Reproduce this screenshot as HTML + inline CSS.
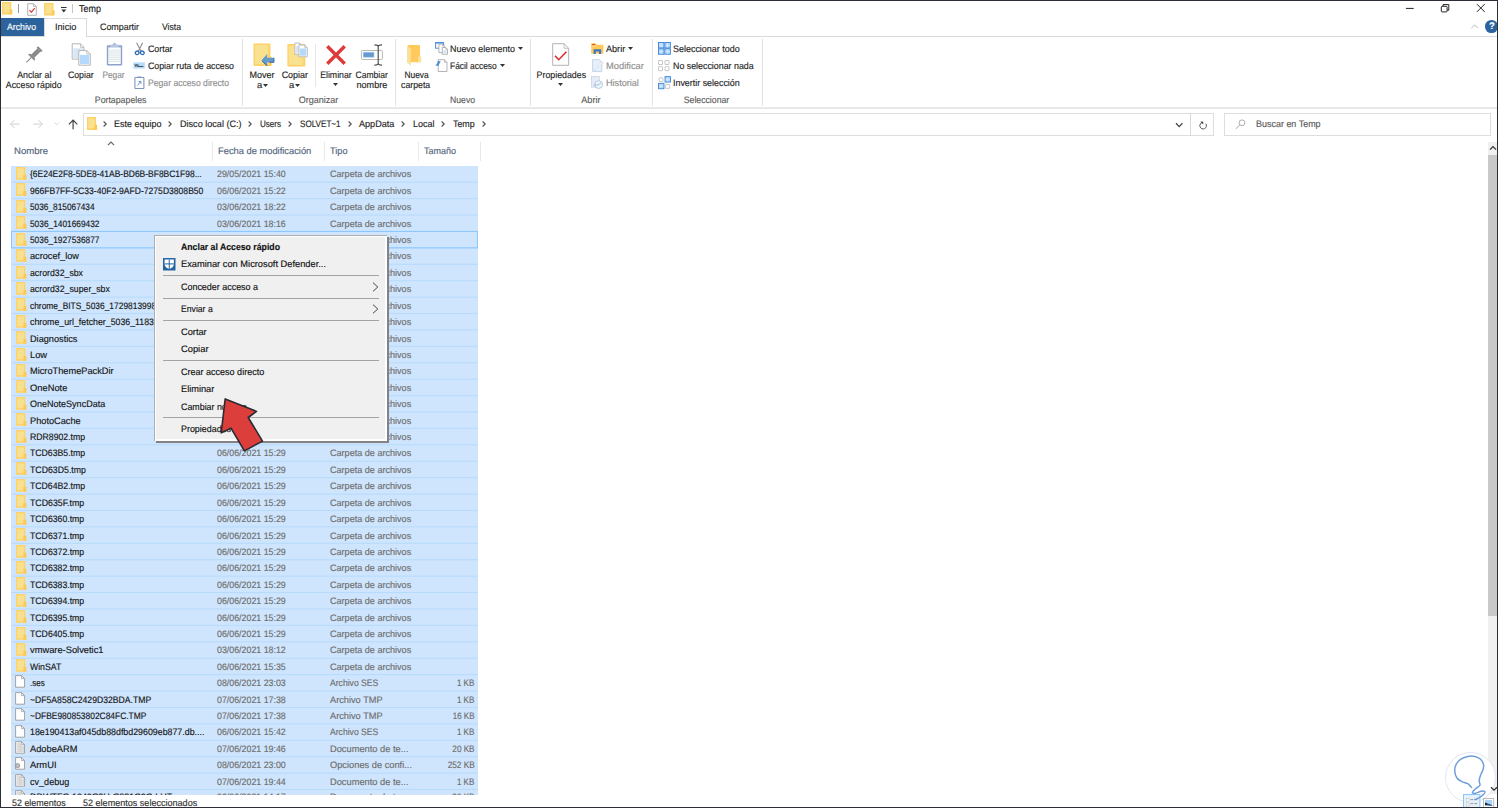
<!DOCTYPE html>
<html lang="es"><head><meta charset="utf-8"><title>Temp</title>
<style>
html,body{margin:0;padding:0;background:#fff;}
body{width:1500px;height:808px;overflow:hidden;position:relative;font-family:"Liberation Sans",sans-serif;font-size:9.4px;text-rendering:geometricPrecision;}
#win{position:absolute;left:0;top:0;width:1500px;height:808px;overflow:hidden;background:#fff;}
#win div,#win svg{position:absolute;}
#win svg{overflow:visible;}
.t{position:absolute;white-space:pre;line-height:14px;height:14px;-webkit-text-stroke:0.15px currentColor;transform-origin:0 0;}

</style></head>
<body>
<div id="win">
<span class="t" style="top:3.10px;color:#111;font-size:10px;left:79.40px;transform:rotate(0.01deg) scaleX(0.8956);">Temp</span>
<div style="left:1px;top:18px;width:42.7px;height:18px;background:#2d639c;"></div>
<span class="t" style="top:20.24px;color:#fff;left:7.30px;transform:rotate(0.01deg) scaleX(0.9275);">Archivo</span>
<div style="left:43.7px;top:18px;width:43.6px;height:18.5px;background:#fff;border:1px solid #dadbdc;border-bottom:none;box-sizing:border-box;"></div>
<span class="t" style="top:20.24px;color:#262626;left:55.00px;transform:rotate(0.01deg) scaleX(0.9730);">Inicio</span>
<span class="t" style="top:20.24px;color:#262626;left:99.70px;transform:rotate(0.01deg) scaleX(0.9476);">Compartir</span>
<span class="t" style="top:20.24px;color:#262626;left:162.00px;transform:rotate(0.01deg) scaleX(0.9184);">Vista</span>
<div style="left:87px;top:36px;width:1410px;height:1px;background:#dadbdc;"></div>
<div style="left:1px;top:36px;width:43px;height:1px;background:#dadbdc;"></div>
<div style="left:1px;top:107px;width:1496px;height:1px;background:#e9eaea;"></div>
<div style="left:1px;top:108px;width:1496px;height:1px;background:#e6e7e7;"></div>
<div style="left:242.0px;top:39px;width:1px;height:67px;background:#e0e1e2;"></div>
<div style="left:395.3px;top:39px;width:1px;height:67px;background:#e0e1e2;"></div>
<div style="left:530.3px;top:39px;width:1px;height:67px;background:#e0e1e2;"></div>
<div style="left:651.5px;top:39px;width:1px;height:67px;background:#e0e1e2;"></div>
<div style="left:761.7px;top:39px;width:1px;height:67px;background:#e0e1e2;"></div>
<div style="left:314.5px;top:43.5px;width:1px;height:43px;background:#e6e6e6;"></div>
<span class="t" style="top:67.74px;color:#262626;left:16.36px;transform-origin:50% 0;transform:rotate(0.01deg) scaleX(0.9374);">Anclar al</span>
<span class="t" style="top:78.04px;color:#262626;left:4.49px;transform-origin:50% 0;transform:rotate(0.01deg) scaleX(0.9374);">Acceso rápido</span>
<span class="t" style="top:67.74px;color:#262626;left:66.59px;transform-origin:50% 0;transform:rotate(0.01deg) scaleX(0.9339);">Copiar</span>
<span class="t" style="top:67.74px;color:#8f8f8f;left:101.08px;transform-origin:50% 0;transform:rotate(0.01deg) scaleX(0.8869);">Pegar</span>
<span class="t" style="top:41.54px;color:#262626;left:148.00px;transform:rotate(0.01deg) scaleX(0.9406);">Cortar</span>
<span class="t" style="top:58.74px;color:#262626;left:148.00px;transform:rotate(0.01deg) scaleX(0.9376);">Copiar ruta de acceso</span>
<span class="t" style="top:75.74px;color:#8f8f8f;left:148.00px;transform:rotate(0.01deg) scaleX(0.9196);">Pegar acceso directo</span>
<span class="t" style="top:93.44px;color:#5e5e5e;left:93.17px;transform-origin:50% 0;transform:rotate(0.01deg) scaleX(0.9357);">Portapapeles</span>
<span class="t" style="top:67.74px;color:#262626;left:249.18px;transform-origin:50% 0;transform:rotate(0.01deg) scaleX(0.9598);">Mover</span>
<span class="t" style="top:78.04px;color:#262626;left:256.59px;transform-origin:50% 0;transform:rotate(0.01deg) scaleX(1.0000);">a</span>
<span class="t" style="top:67.74px;color:#262626;left:280.99px;transform-origin:50% 0;transform:rotate(0.01deg) scaleX(0.9520);">Copiar</span>
<span class="t" style="top:78.04px;color:#262626;left:289.39px;transform-origin:50% 0;transform:rotate(0.01deg) scaleX(1.0000);">a</span>
<span class="t" style="top:67.74px;color:#262626;left:318.56px;transform-origin:50% 0;transform:rotate(0.01deg) scaleX(0.9328);">Eliminar</span>
<span class="t" style="top:67.74px;color:#262626;left:354.18px;transform-origin:50% 0;transform:rotate(0.01deg) scaleX(0.9086);">Cambiar</span>
<span class="t" style="top:78.04px;color:#262626;left:356.20px;transform-origin:50% 0;transform:rotate(0.01deg) scaleX(0.9686);">nombre</span>
<span class="t" style="top:93.44px;color:#5e5e5e;left:297.91px;transform-origin:50% 0;transform:rotate(0.01deg) scaleX(0.9618);">Organizar</span>
<span class="t" style="top:67.74px;color:#262626;left:402.55px;transform-origin:50% 0;transform:rotate(0.01deg) scaleX(0.8964);">Nueva</span>
<span class="t" style="top:78.04px;color:#262626;left:399.76px;transform-origin:50% 0;transform:rotate(0.01deg) scaleX(0.9335);">carpeta</span>
<span class="t" style="top:41.54px;color:#262626;left:450.30px;transform:rotate(0.01deg) scaleX(0.9519);">Nuevo elemento</span>
<span class="t" style="top:58.74px;color:#262626;left:450.30px;transform:rotate(0.01deg) scaleX(0.8962);">Fácil acceso</span>
<span class="t" style="top:93.44px;color:#5e5e5e;left:448.65px;transform-origin:50% 0;transform:rotate(0.01deg) scaleX(0.9222);">Nuevo</span>
<span class="t" style="top:67.74px;color:#262626;left:534.67px;transform-origin:50% 0;transform:rotate(0.01deg) scaleX(0.9401);">Propiedades</span>
<span class="t" style="top:41.54px;color:#262626;left:605.80px;transform:rotate(0.01deg) scaleX(0.9699);">Abrir</span>
<span class="t" style="top:58.74px;color:#8f8f8f;left:605.80px;transform:rotate(0.01deg) scaleX(0.9965);">Modificar</span>
<span class="t" style="top:75.74px;color:#8f8f8f;left:605.80px;transform:rotate(0.01deg) scaleX(0.9712);">Historial</span>
<span class="t" style="top:93.44px;color:#5e5e5e;left:580.50px;transform-origin:50% 0;transform:rotate(0.01deg) scaleX(0.9699);">Abrir</span>
<span class="t" style="top:41.54px;color:#262626;left:673.00px;transform:rotate(0.01deg) scaleX(0.9550);">Seleccionar todo</span>
<span class="t" style="top:58.74px;color:#262626;left:673.00px;transform:rotate(0.01deg) scaleX(0.9440);">No seleccionar nada</span>
<span class="t" style="top:75.74px;color:#262626;left:673.00px;transform:rotate(0.01deg) scaleX(0.9482);">Invertir selección</span>
<span class="t" style="top:93.44px;color:#5e5e5e;left:682.00px;transform-origin:50% 0;transform:rotate(0.01deg) scaleX(0.9265);">Seleccionar</span>
<svg style="left:262.7px;top:83.9px" width="5" height="3" viewBox="0 0 5 3"><path d="M0 0h5L2.5 3z" fill="#333"/></svg>
<svg style="left:295.4px;top:83.9px" width="5" height="3" viewBox="0 0 5 3"><path d="M0 0h5L2.5 3z" fill="#333"/></svg>
<svg style="left:332.8px;top:83.3px" width="5" height="3" viewBox="0 0 5 3"><path d="M0 0h5L2.5 3z" fill="#333"/></svg>
<svg style="left:558.3px;top:83.1px" width="5" height="3" viewBox="0 0 5 3"><path d="M0 0h5L2.5 3z" fill="#333"/></svg>
<svg style="left:518.3px;top:46.9px" width="5" height="3" viewBox="0 0 5 3"><path d="M0 0h5L2.5 3z" fill="#333"/></svg>
<svg style="left:499.7px;top:64.3px" width="5" height="3" viewBox="0 0 5 3"><path d="M0 0h5L2.5 3z" fill="#333"/></svg>
<svg style="left:628.3px;top:46.9px" width="5" height="3" viewBox="0 0 5 3"><path d="M0 0h5L2.5 3z" fill="#333"/></svg>
<div style="left:83px;top:112.5px;width:1131px;height:23.5px;background:#fff;border:1px solid #dedede;box-sizing:border-box;"></div>
<div style="left:1190.3px;top:113px;width:1px;height:22.5px;background:#d9d9d9;"></div>
<div style="left:1224px;top:112.5px;width:267px;height:23.5px;background:#fff;border:1px solid #dedede;box-sizing:border-box;"></div>
<span class="t" style="top:117.24px;color:#5a5a5a;left:1255.90px;transform:rotate(0.01deg) scaleX(0.9559);">Buscar en Temp</span>
<span class="t" style="top:117.24px;color:#262626;left:114.20px;transform:rotate(0.01deg) scaleX(0.9590);">Este equipo</span>
<span class="t" style="top:117.24px;color:#262626;left:179.70px;transform:rotate(0.01deg) scaleX(0.9691);">Disco local (C:)</span>
<span class="t" style="top:117.24px;color:#262626;left:259.70px;transform:rotate(0.01deg) scaleX(0.8618);">Users</span>
<span class="t" style="top:117.24px;color:#262626;left:299.70px;transform:rotate(0.01deg) scaleX(0.8641);">SOLVET~1</span>
<span class="t" style="top:117.24px;color:#262626;left:358.80px;transform:rotate(0.01deg) scaleX(0.9703);">AppData</span>
<span class="t" style="top:117.24px;color:#262626;left:412.80px;transform:rotate(0.01deg) scaleX(0.9544);">Local</span>
<span class="t" style="top:117.24px;color:#262626;left:453.00px;transform:rotate(0.01deg) scaleX(0.9460);">Temp</span>
<svg style="left:102.7px;top:121.4px" width="4" height="6" viewBox="0 0 4 6"><path d="M0.6 0.5L3.2 3L0.6 5.5" fill="none" stroke="#555" stroke-width="1.15"/></svg>
<svg style="left:168.3px;top:121.4px" width="4" height="6" viewBox="0 0 4 6"><path d="M0.6 0.5L3.2 3L0.6 5.5" fill="none" stroke="#555" stroke-width="1.15"/></svg>
<svg style="left:248.3px;top:121.4px" width="4" height="6" viewBox="0 0 4 6"><path d="M0.6 0.5L3.2 3L0.6 5.5" fill="none" stroke="#555" stroke-width="1.15"/></svg>
<svg style="left:287.7px;top:121.4px" width="4" height="6" viewBox="0 0 4 6"><path d="M0.6 0.5L3.2 3L0.6 5.5" fill="none" stroke="#555" stroke-width="1.15"/></svg>
<svg style="left:347.5px;top:121.4px" width="4" height="6" viewBox="0 0 4 6"><path d="M0.6 0.5L3.2 3L0.6 5.5" fill="none" stroke="#555" stroke-width="1.15"/></svg>
<svg style="left:401.3px;top:121.4px" width="4" height="6" viewBox="0 0 4 6"><path d="M0.6 0.5L3.2 3L0.6 5.5" fill="none" stroke="#555" stroke-width="1.15"/></svg>
<svg style="left:441.3px;top:121.4px" width="4" height="6" viewBox="0 0 4 6"><path d="M0.6 0.5L3.2 3L0.6 5.5" fill="none" stroke="#555" stroke-width="1.15"/></svg>
<svg style="left:482.2px;top:121.4px" width="4" height="6" viewBox="0 0 4 6"><path d="M0.6 0.5L3.2 3L0.6 5.5" fill="none" stroke="#555" stroke-width="1.15"/></svg>
<span class="t" style="top:144.44px;color:#53657d;left:13.70px;transform:rotate(0.01deg) scaleX(1.0227);">Nombre</span>
<span class="t" style="top:144.44px;color:#53657d;left:217.50px;transform:rotate(0.01deg) scaleX(0.9945);">Fecha de modificación</span>
<span class="t" style="top:144.44px;color:#53657d;left:330.30px;transform:rotate(0.01deg) scaleX(0.9782);">Tipo</span>
<span class="t" style="top:144.44px;color:#53657d;left:424.20px;transform:rotate(0.01deg) scaleX(0.9593);">Tamaño</span>
<div style="left:212.0px;top:142px;width:1px;height:18.5px;background:#e9e9e9;"></div>
<div style="left:324.0px;top:142px;width:1px;height:18.5px;background:#e9e9e9;"></div>
<div style="left:418.2px;top:142px;width:1px;height:18.5px;background:#e9e9e9;"></div>
<div style="left:480.3px;top:142px;width:1px;height:18.5px;background:#e9e9e9;"></div>
<svg style="left:106.6px;top:140.6px" width="8" height="5" viewBox="0 0 8 5"><path d="M0.9 4.1L4 1.1L7.1 4.1" fill="none" stroke="#666" stroke-width="1.25"/></svg>
<div style="left:0;top:0;width:1500px;height:795.1px;overflow:hidden">
<svg style="left:0;top:0" width="500" height="800" viewBox="0 0 500 800"><rect x="11" y="166.0" width="467" height="631.10" fill="#cfe5fd"/><rect x="11" y="181.65" width="467" height="1.1" fill="#b7dbfc"/><rect x="11" y="198.07" width="467" height="1.1" fill="#b7dbfc"/><rect x="11" y="214.48" width="467" height="1.1" fill="#b7dbfc"/><rect x="11" y="230.90" width="467" height="1.1" fill="#b7dbfc"/><rect x="11" y="247.31" width="467" height="1.1" fill="#b7dbfc"/><rect x="11" y="263.72" width="467" height="1.1" fill="#b7dbfc"/><rect x="11" y="280.14" width="467" height="1.1" fill="#b7dbfc"/><rect x="11" y="296.55" width="467" height="1.1" fill="#b7dbfc"/><rect x="11" y="312.97" width="467" height="1.1" fill="#b7dbfc"/><rect x="11" y="329.38" width="467" height="1.1" fill="#b7dbfc"/><rect x="11" y="345.79" width="467" height="1.1" fill="#b7dbfc"/><rect x="11" y="362.21" width="467" height="1.1" fill="#b7dbfc"/><rect x="11" y="378.62" width="467" height="1.1" fill="#b7dbfc"/><rect x="11" y="395.04" width="467" height="1.1" fill="#b7dbfc"/><rect x="11" y="411.45" width="467" height="1.1" fill="#b7dbfc"/><rect x="11" y="427.86" width="467" height="1.1" fill="#b7dbfc"/><rect x="11" y="444.28" width="467" height="1.1" fill="#b7dbfc"/><rect x="11" y="460.69" width="467" height="1.1" fill="#b7dbfc"/><rect x="11" y="477.11" width="467" height="1.1" fill="#b7dbfc"/><rect x="11" y="493.52" width="467" height="1.1" fill="#b7dbfc"/><rect x="11" y="509.93" width="467" height="1.1" fill="#b7dbfc"/><rect x="11" y="526.35" width="467" height="1.1" fill="#b7dbfc"/><rect x="11" y="542.76" width="467" height="1.1" fill="#b7dbfc"/><rect x="11" y="559.18" width="467" height="1.1" fill="#b7dbfc"/><rect x="11" y="575.59" width="467" height="1.1" fill="#b7dbfc"/><rect x="11" y="592.00" width="467" height="1.1" fill="#b7dbfc"/><rect x="11" y="608.42" width="467" height="1.1" fill="#b7dbfc"/><rect x="11" y="624.83" width="467" height="1.1" fill="#b7dbfc"/><rect x="11" y="641.25" width="467" height="1.1" fill="#b7dbfc"/><rect x="11" y="657.66" width="467" height="1.1" fill="#b7dbfc"/><rect x="11" y="674.07" width="467" height="1.1" fill="#b7dbfc"/><rect x="11" y="690.49" width="467" height="1.1" fill="#b7dbfc"/><rect x="11" y="706.90" width="467" height="1.1" fill="#b7dbfc"/><rect x="11" y="723.32" width="467" height="1.1" fill="#b7dbfc"/><rect x="11" y="739.73" width="467" height="1.1" fill="#b7dbfc"/><rect x="11" y="756.14" width="467" height="1.1" fill="#b7dbfc"/><rect x="11" y="772.56" width="467" height="1.1" fill="#b7dbfc"/><rect x="11" y="788.97" width="467" height="1.1" fill="#b7dbfc"/><rect x="11.5" y="231.45" width="466" height="16.41" fill="none" stroke="#8cc6fb" stroke-width="1"/></svg>
<svg style="left:15.7px;top:167.04px" width="10.4" height="13" viewBox="0 0 10.4 13"><rect x="0" y="0" width="9.3" height="12.8" rx="0.6" fill="#ffd267"/><rect x="1.3" y="1.4" width="6.6" height="9.7" fill="#f7e190"/><rect x="7.5" y="7.8" width="2.9" height="5" fill="#ffc84f"/></svg>
<span class="t" style="top:167.39px;color:#151515;left:29.80px;transform:rotate(0.01deg) scaleX(0.9027);">{6E24E2F8-5DE8-41AB-BD6B-BF8BC1F98...</span>
<span class="t" style="top:167.39px;color:#6e6e6e;left:217.00px;transform:rotate(0.01deg) scaleX(0.9425);">29/05/2021 15:40</span>
<span class="t" style="top:167.39px;color:#6e6e6e;left:329.70px;transform:rotate(0.01deg) scaleX(0.9677);">Carpeta de archivos</span>
<svg style="left:15.7px;top:183.45px" width="10.4" height="13" viewBox="0 0 10.4 13"><rect x="0" y="0" width="9.3" height="12.8" rx="0.6" fill="#ffd267"/><rect x="1.3" y="1.4" width="6.6" height="9.7" fill="#f7e190"/><rect x="7.5" y="7.8" width="2.9" height="5" fill="#ffc84f"/></svg>
<span class="t" style="top:183.80px;color:#151515;left:29.80px;transform:rotate(0.01deg) scaleX(0.9141);">966FB7FF-5C33-40F2-9AFD-7275D3808B50</span>
<span class="t" style="top:183.80px;color:#6e6e6e;left:217.00px;transform:rotate(0.01deg) scaleX(0.9425);">06/06/2021 15:22</span>
<span class="t" style="top:183.80px;color:#6e6e6e;left:329.70px;transform:rotate(0.01deg) scaleX(0.9677);">Carpeta de archivos</span>
<svg style="left:15.7px;top:199.87px" width="10.4" height="13" viewBox="0 0 10.4 13"><rect x="0" y="0" width="9.3" height="12.8" rx="0.6" fill="#ffd267"/><rect x="1.3" y="1.4" width="6.6" height="9.7" fill="#f7e190"/><rect x="7.5" y="7.8" width="2.9" height="5" fill="#ffc84f"/></svg>
<span class="t" style="top:200.22px;color:#151515;left:29.80px;transform:rotate(0.01deg) scaleX(0.8849);">5036_815067434</span>
<span class="t" style="top:200.22px;color:#6e6e6e;left:217.00px;transform:rotate(0.01deg) scaleX(0.9425);">03/06/2021 18:22</span>
<span class="t" style="top:200.22px;color:#6e6e6e;left:329.70px;transform:rotate(0.01deg) scaleX(0.9677);">Carpeta de archivos</span>
<svg style="left:15.7px;top:216.28px" width="10.4" height="13" viewBox="0 0 10.4 13"><rect x="0" y="0" width="9.3" height="12.8" rx="0.6" fill="#ffd267"/><rect x="1.3" y="1.4" width="6.6" height="9.7" fill="#f7e190"/><rect x="7.5" y="7.8" width="2.9" height="5" fill="#ffc84f"/></svg>
<span class="t" style="top:216.63px;color:#151515;left:29.80px;transform:rotate(0.01deg) scaleX(0.8873);">5036_1401669432</span>
<span class="t" style="top:216.63px;color:#6e6e6e;left:217.00px;transform:rotate(0.01deg) scaleX(0.9425);">03/06/2021 18:16</span>
<span class="t" style="top:216.63px;color:#6e6e6e;left:329.70px;transform:rotate(0.01deg) scaleX(0.9677);">Carpeta de archivos</span>
<svg style="left:15.7px;top:232.70px" width="10.4" height="13" viewBox="0 0 10.4 13"><rect x="0" y="0" width="9.3" height="12.8" rx="0.6" fill="#ffd267"/><rect x="1.3" y="1.4" width="6.6" height="9.7" fill="#f7e190"/><rect x="7.5" y="7.8" width="2.9" height="5" fill="#ffc84f"/></svg>
<span class="t" style="top:233.05px;color:#151515;left:29.80px;transform:rotate(0.01deg) scaleX(0.8873);">5036_1927536877</span>
<span class="t" style="top:233.05px;color:#6e6e6e;left:217.00px;transform:rotate(0.01deg) scaleX(0.9425);">03/06/2021 18:16</span>
<span class="t" style="top:233.05px;color:#6e6e6e;left:329.70px;transform:rotate(0.01deg) scaleX(0.9677);">Carpeta de archivos</span>
<svg style="left:15.7px;top:249.11px" width="10.4" height="13" viewBox="0 0 10.4 13"><rect x="0" y="0" width="9.3" height="12.8" rx="0.6" fill="#ffd267"/><rect x="1.3" y="1.4" width="6.6" height="9.7" fill="#f7e190"/><rect x="7.5" y="7.8" width="2.9" height="5" fill="#ffc84f"/></svg>
<span class="t" style="top:249.46px;color:#151515;left:29.80px;transform:rotate(0.01deg) scaleX(0.9794);">acrocef_low</span>
<span class="t" style="top:249.46px;color:#6e6e6e;left:217.00px;transform:rotate(0.01deg) scaleX(0.9425);">06/06/2021 15:22</span>
<span class="t" style="top:249.46px;color:#6e6e6e;left:329.70px;transform:rotate(0.01deg) scaleX(0.9677);">Carpeta de archivos</span>
<svg style="left:15.7px;top:265.52px" width="10.4" height="13" viewBox="0 0 10.4 13"><rect x="0" y="0" width="9.3" height="12.8" rx="0.6" fill="#ffd267"/><rect x="1.3" y="1.4" width="6.6" height="9.7" fill="#f7e190"/><rect x="7.5" y="7.8" width="2.9" height="5" fill="#ffc84f"/></svg>
<span class="t" style="top:265.87px;color:#151515;left:29.80px;transform:rotate(0.01deg) scaleX(0.9329);">acrord32_sbx</span>
<span class="t" style="top:265.87px;color:#6e6e6e;left:217.00px;transform:rotate(0.01deg) scaleX(0.9425);">06/06/2021 15:22</span>
<span class="t" style="top:265.87px;color:#6e6e6e;left:329.70px;transform:rotate(0.01deg) scaleX(0.9677);">Carpeta de archivos</span>
<svg style="left:15.7px;top:281.94px" width="10.4" height="13" viewBox="0 0 10.4 13"><rect x="0" y="0" width="9.3" height="12.8" rx="0.6" fill="#ffd267"/><rect x="1.3" y="1.4" width="6.6" height="9.7" fill="#f7e190"/><rect x="7.5" y="7.8" width="2.9" height="5" fill="#ffc84f"/></svg>
<span class="t" style="top:282.29px;color:#151515;left:29.80px;transform:rotate(0.01deg) scaleX(0.9335);">acrord32_super_sbx</span>
<span class="t" style="top:282.29px;color:#6e6e6e;left:217.00px;transform:rotate(0.01deg) scaleX(0.9425);">06/06/2021 15:22</span>
<span class="t" style="top:282.29px;color:#6e6e6e;left:329.70px;transform:rotate(0.01deg) scaleX(0.9677);">Carpeta de archivos</span>
<svg style="left:15.7px;top:298.35px" width="10.4" height="13" viewBox="0 0 10.4 13"><rect x="0" y="0" width="9.3" height="12.8" rx="0.6" fill="#ffd267"/><rect x="1.3" y="1.4" width="6.6" height="9.7" fill="#f7e190"/><rect x="7.5" y="7.8" width="2.9" height="5" fill="#ffc84f"/></svg>
<span class="t" style="top:298.70px;color:#151515;left:29.80px;transform:rotate(0.01deg) scaleX(0.8959);">chrome_BITS_5036_1729813998</span>
<span class="t" style="top:298.70px;color:#6e6e6e;left:217.00px;transform:rotate(0.01deg) scaleX(0.9425);">06/06/2021 15:22</span>
<span class="t" style="top:298.70px;color:#6e6e6e;left:329.70px;transform:rotate(0.01deg) scaleX(0.9677);">Carpeta de archivos</span>
<svg style="left:15.7px;top:314.77px" width="10.4" height="13" viewBox="0 0 10.4 13"><rect x="0" y="0" width="9.3" height="12.8" rx="0.6" fill="#ffd267"/><rect x="1.3" y="1.4" width="6.6" height="9.7" fill="#f7e190"/><rect x="7.5" y="7.8" width="2.9" height="5" fill="#ffc84f"/></svg>
<span class="t" style="top:315.12px;color:#151515;left:29.80px;transform:rotate(0.01deg) scaleX(0.9378);">chrome_url_fetcher_5036_1183</span>
<span class="t" style="top:315.12px;color:#6e6e6e;left:217.00px;transform:rotate(0.01deg) scaleX(0.9425);">06/06/2021 15:22</span>
<span class="t" style="top:315.12px;color:#6e6e6e;left:329.70px;transform:rotate(0.01deg) scaleX(0.9677);">Carpeta de archivos</span>
<svg style="left:15.7px;top:331.18px" width="10.4" height="13" viewBox="0 0 10.4 13"><rect x="0" y="0" width="9.3" height="12.8" rx="0.6" fill="#ffd267"/><rect x="1.3" y="1.4" width="6.6" height="9.7" fill="#f7e190"/><rect x="7.5" y="7.8" width="2.9" height="5" fill="#ffc84f"/></svg>
<span class="t" style="top:331.53px;color:#151515;left:29.80px;transform:rotate(0.01deg) scaleX(0.9779);">Diagnostics</span>
<span class="t" style="top:331.53px;color:#6e6e6e;left:217.00px;transform:rotate(0.01deg) scaleX(0.9425);">06/06/2021 15:22</span>
<span class="t" style="top:331.53px;color:#6e6e6e;left:329.70px;transform:rotate(0.01deg) scaleX(0.9677);">Carpeta de archivos</span>
<svg style="left:15.7px;top:347.59px" width="10.4" height="13" viewBox="0 0 10.4 13"><rect x="0" y="0" width="9.3" height="12.8" rx="0.6" fill="#ffd267"/><rect x="1.3" y="1.4" width="6.6" height="9.7" fill="#f7e190"/><rect x="7.5" y="7.8" width="2.9" height="5" fill="#ffc84f"/></svg>
<span class="t" style="top:347.94px;color:#151515;left:29.80px;transform:rotate(0.01deg) scaleX(0.9940);">Low</span>
<span class="t" style="top:347.94px;color:#6e6e6e;left:217.00px;transform:rotate(0.01deg) scaleX(0.9425);">06/06/2021 15:22</span>
<span class="t" style="top:347.94px;color:#6e6e6e;left:329.70px;transform:rotate(0.01deg) scaleX(0.9677);">Carpeta de archivos</span>
<svg style="left:15.7px;top:364.01px" width="10.4" height="13" viewBox="0 0 10.4 13"><rect x="0" y="0" width="9.3" height="12.8" rx="0.6" fill="#ffd267"/><rect x="1.3" y="1.4" width="6.6" height="9.7" fill="#f7e190"/><rect x="7.5" y="7.8" width="2.9" height="5" fill="#ffc84f"/></svg>
<span class="t" style="top:364.36px;color:#151515;left:29.80px;transform:rotate(0.01deg) scaleX(0.9844);">MicroThemePackDir</span>
<span class="t" style="top:364.36px;color:#6e6e6e;left:217.00px;transform:rotate(0.01deg) scaleX(0.9425);">06/06/2021 15:22</span>
<span class="t" style="top:364.36px;color:#6e6e6e;left:329.70px;transform:rotate(0.01deg) scaleX(0.9677);">Carpeta de archivos</span>
<svg style="left:15.7px;top:380.42px" width="10.4" height="13" viewBox="0 0 10.4 13"><rect x="0" y="0" width="9.3" height="12.8" rx="0.6" fill="#ffd267"/><rect x="1.3" y="1.4" width="6.6" height="9.7" fill="#f7e190"/><rect x="7.5" y="7.8" width="2.9" height="5" fill="#ffc84f"/></svg>
<span class="t" style="top:380.77px;color:#151515;left:29.80px;transform:rotate(0.01deg) scaleX(0.9965);">OneNote</span>
<span class="t" style="top:380.77px;color:#6e6e6e;left:217.00px;transform:rotate(0.01deg) scaleX(0.9425);">06/06/2021 15:22</span>
<span class="t" style="top:380.77px;color:#6e6e6e;left:329.70px;transform:rotate(0.01deg) scaleX(0.9677);">Carpeta de archivos</span>
<svg style="left:15.7px;top:396.84px" width="10.4" height="13" viewBox="0 0 10.4 13"><rect x="0" y="0" width="9.3" height="12.8" rx="0.6" fill="#ffd267"/><rect x="1.3" y="1.4" width="6.6" height="9.7" fill="#f7e190"/><rect x="7.5" y="7.8" width="2.9" height="5" fill="#ffc84f"/></svg>
<span class="t" style="top:397.19px;color:#151515;left:29.80px;transform:rotate(0.01deg) scaleX(0.9620);">OneNoteSyncData</span>
<span class="t" style="top:397.19px;color:#6e6e6e;left:217.00px;transform:rotate(0.01deg) scaleX(0.9425);">06/06/2021 15:22</span>
<span class="t" style="top:397.19px;color:#6e6e6e;left:329.70px;transform:rotate(0.01deg) scaleX(0.9677);">Carpeta de archivos</span>
<svg style="left:15.7px;top:413.25px" width="10.4" height="13" viewBox="0 0 10.4 13"><rect x="0" y="0" width="9.3" height="12.8" rx="0.6" fill="#ffd267"/><rect x="1.3" y="1.4" width="6.6" height="9.7" fill="#f7e190"/><rect x="7.5" y="7.8" width="2.9" height="5" fill="#ffc84f"/></svg>
<span class="t" style="top:413.60px;color:#151515;left:29.80px;transform:rotate(0.01deg) scaleX(0.9824);">PhotoCache</span>
<span class="t" style="top:413.60px;color:#6e6e6e;left:217.00px;transform:rotate(0.01deg) scaleX(0.9425);">06/06/2021 15:22</span>
<span class="t" style="top:413.60px;color:#6e6e6e;left:329.70px;transform:rotate(0.01deg) scaleX(0.9677);">Carpeta de archivos</span>
<svg style="left:15.7px;top:429.66px" width="10.4" height="13" viewBox="0 0 10.4 13"><rect x="0" y="0" width="9.3" height="12.8" rx="0.6" fill="#ffd267"/><rect x="1.3" y="1.4" width="6.6" height="9.7" fill="#f7e190"/><rect x="7.5" y="7.8" width="2.9" height="5" fill="#ffc84f"/></svg>
<span class="t" style="top:430.01px;color:#151515;left:29.80px;transform:rotate(0.01deg) scaleX(0.9275);">RDR8902.tmp</span>
<span class="t" style="top:430.01px;color:#6e6e6e;left:217.00px;transform:rotate(0.01deg) scaleX(0.9425);">06/06/2021 15:29</span>
<span class="t" style="top:430.01px;color:#6e6e6e;left:329.70px;transform:rotate(0.01deg) scaleX(0.9677);">Carpeta de archivos</span>
<svg style="left:15.7px;top:446.08px" width="10.4" height="13" viewBox="0 0 10.4 13"><rect x="0" y="0" width="9.3" height="12.8" rx="0.6" fill="#ffd267"/><rect x="1.3" y="1.4" width="6.6" height="9.7" fill="#f7e190"/><rect x="7.5" y="7.8" width="2.9" height="5" fill="#ffc84f"/></svg>
<span class="t" style="top:446.43px;color:#151515;left:29.80px;transform:rotate(0.01deg) scaleX(0.9275);">TCD63B5.tmp</span>
<span class="t" style="top:446.43px;color:#6e6e6e;left:217.00px;transform:rotate(0.01deg) scaleX(0.9425);">06/06/2021 15:29</span>
<span class="t" style="top:446.43px;color:#6e6e6e;left:329.70px;transform:rotate(0.01deg) scaleX(0.9677);">Carpeta de archivos</span>
<svg style="left:15.7px;top:462.49px" width="10.4" height="13" viewBox="0 0 10.4 13"><rect x="0" y="0" width="9.3" height="12.8" rx="0.6" fill="#ffd267"/><rect x="1.3" y="1.4" width="6.6" height="9.7" fill="#f7e190"/><rect x="7.5" y="7.8" width="2.9" height="5" fill="#ffc84f"/></svg>
<span class="t" style="top:462.84px;color:#151515;left:29.80px;transform:rotate(0.01deg) scaleX(0.9329);">TCD63D5.tmp</span>
<span class="t" style="top:462.84px;color:#6e6e6e;left:217.00px;transform:rotate(0.01deg) scaleX(0.9425);">06/06/2021 15:29</span>
<span class="t" style="top:462.84px;color:#6e6e6e;left:329.70px;transform:rotate(0.01deg) scaleX(0.9677);">Carpeta de archivos</span>
<svg style="left:15.7px;top:478.91px" width="10.4" height="13" viewBox="0 0 10.4 13"><rect x="0" y="0" width="9.3" height="12.8" rx="0.6" fill="#ffd267"/><rect x="1.3" y="1.4" width="6.6" height="9.7" fill="#f7e190"/><rect x="7.5" y="7.8" width="2.9" height="5" fill="#ffc84f"/></svg>
<span class="t" style="top:479.26px;color:#151515;left:29.80px;transform:rotate(0.01deg) scaleX(0.9275);">TCD64B2.tmp</span>
<span class="t" style="top:479.26px;color:#6e6e6e;left:217.00px;transform:rotate(0.01deg) scaleX(0.9425);">06/06/2021 15:29</span>
<span class="t" style="top:479.26px;color:#6e6e6e;left:329.70px;transform:rotate(0.01deg) scaleX(0.9677);">Carpeta de archivos</span>
<svg style="left:15.7px;top:495.32px" width="10.4" height="13" viewBox="0 0 10.4 13"><rect x="0" y="0" width="9.3" height="12.8" rx="0.6" fill="#ffd267"/><rect x="1.3" y="1.4" width="6.6" height="9.7" fill="#f7e190"/><rect x="7.5" y="7.8" width="2.9" height="5" fill="#ffc84f"/></svg>
<span class="t" style="top:495.67px;color:#151515;left:29.80px;transform:rotate(0.01deg) scaleX(0.9373);">TCD635F.tmp</span>
<span class="t" style="top:495.67px;color:#6e6e6e;left:217.00px;transform:rotate(0.01deg) scaleX(0.9425);">06/06/2021 15:29</span>
<span class="t" style="top:495.67px;color:#6e6e6e;left:329.70px;transform:rotate(0.01deg) scaleX(0.9677);">Carpeta de archivos</span>
<svg style="left:15.7px;top:511.73px" width="10.4" height="13" viewBox="0 0 10.4 13"><rect x="0" y="0" width="9.3" height="12.8" rx="0.6" fill="#ffd267"/><rect x="1.3" y="1.4" width="6.6" height="9.7" fill="#f7e190"/><rect x="7.5" y="7.8" width="2.9" height="5" fill="#ffc84f"/></svg>
<span class="t" style="top:512.08px;color:#151515;left:29.80px;transform:rotate(0.01deg) scaleX(0.9287);">TCD6360.tmp</span>
<span class="t" style="top:512.08px;color:#6e6e6e;left:217.00px;transform:rotate(0.01deg) scaleX(0.9425);">06/06/2021 15:29</span>
<span class="t" style="top:512.08px;color:#6e6e6e;left:329.70px;transform:rotate(0.01deg) scaleX(0.9677);">Carpeta de archivos</span>
<svg style="left:15.7px;top:528.15px" width="10.4" height="13" viewBox="0 0 10.4 13"><rect x="0" y="0" width="9.3" height="12.8" rx="0.6" fill="#ffd267"/><rect x="1.3" y="1.4" width="6.6" height="9.7" fill="#f7e190"/><rect x="7.5" y="7.8" width="2.9" height="5" fill="#ffc84f"/></svg>
<span class="t" style="top:528.50px;color:#151515;left:29.80px;transform:rotate(0.01deg) scaleX(0.9287);">TCD6371.tmp</span>
<span class="t" style="top:528.50px;color:#6e6e6e;left:217.00px;transform:rotate(0.01deg) scaleX(0.9425);">06/06/2021 15:29</span>
<span class="t" style="top:528.50px;color:#6e6e6e;left:329.70px;transform:rotate(0.01deg) scaleX(0.9677);">Carpeta de archivos</span>
<svg style="left:15.7px;top:544.56px" width="10.4" height="13" viewBox="0 0 10.4 13"><rect x="0" y="0" width="9.3" height="12.8" rx="0.6" fill="#ffd267"/><rect x="1.3" y="1.4" width="6.6" height="9.7" fill="#f7e190"/><rect x="7.5" y="7.8" width="2.9" height="5" fill="#ffc84f"/></svg>
<span class="t" style="top:544.91px;color:#151515;left:29.80px;transform:rotate(0.01deg) scaleX(0.9287);">TCD6372.tmp</span>
<span class="t" style="top:544.91px;color:#6e6e6e;left:217.00px;transform:rotate(0.01deg) scaleX(0.9425);">06/06/2021 15:29</span>
<span class="t" style="top:544.91px;color:#6e6e6e;left:329.70px;transform:rotate(0.01deg) scaleX(0.9677);">Carpeta de archivos</span>
<svg style="left:15.7px;top:560.98px" width="10.4" height="13" viewBox="0 0 10.4 13"><rect x="0" y="0" width="9.3" height="12.8" rx="0.6" fill="#ffd267"/><rect x="1.3" y="1.4" width="6.6" height="9.7" fill="#f7e190"/><rect x="7.5" y="7.8" width="2.9" height="5" fill="#ffc84f"/></svg>
<span class="t" style="top:561.33px;color:#151515;left:29.80px;transform:rotate(0.01deg) scaleX(0.9287);">TCD6382.tmp</span>
<span class="t" style="top:561.33px;color:#6e6e6e;left:217.00px;transform:rotate(0.01deg) scaleX(0.9425);">06/06/2021 15:29</span>
<span class="t" style="top:561.33px;color:#6e6e6e;left:329.70px;transform:rotate(0.01deg) scaleX(0.9677);">Carpeta de archivos</span>
<svg style="left:15.7px;top:577.39px" width="10.4" height="13" viewBox="0 0 10.4 13"><rect x="0" y="0" width="9.3" height="12.8" rx="0.6" fill="#ffd267"/><rect x="1.3" y="1.4" width="6.6" height="9.7" fill="#f7e190"/><rect x="7.5" y="7.8" width="2.9" height="5" fill="#ffc84f"/></svg>
<span class="t" style="top:577.74px;color:#151515;left:29.80px;transform:rotate(0.01deg) scaleX(0.9287);">TCD6383.tmp</span>
<span class="t" style="top:577.74px;color:#6e6e6e;left:217.00px;transform:rotate(0.01deg) scaleX(0.9425);">06/06/2021 15:29</span>
<span class="t" style="top:577.74px;color:#6e6e6e;left:329.70px;transform:rotate(0.01deg) scaleX(0.9677);">Carpeta de archivos</span>
<svg style="left:15.7px;top:593.80px" width="10.4" height="13" viewBox="0 0 10.4 13"><rect x="0" y="0" width="9.3" height="12.8" rx="0.6" fill="#ffd267"/><rect x="1.3" y="1.4" width="6.6" height="9.7" fill="#f7e190"/><rect x="7.5" y="7.8" width="2.9" height="5" fill="#ffc84f"/></svg>
<span class="t" style="top:594.15px;color:#151515;left:29.80px;transform:rotate(0.01deg) scaleX(0.9287);">TCD6394.tmp</span>
<span class="t" style="top:594.15px;color:#6e6e6e;left:217.00px;transform:rotate(0.01deg) scaleX(0.9425);">06/06/2021 15:29</span>
<span class="t" style="top:594.15px;color:#6e6e6e;left:329.70px;transform:rotate(0.01deg) scaleX(0.9677);">Carpeta de archivos</span>
<svg style="left:15.7px;top:610.22px" width="10.4" height="13" viewBox="0 0 10.4 13"><rect x="0" y="0" width="9.3" height="12.8" rx="0.6" fill="#ffd267"/><rect x="1.3" y="1.4" width="6.6" height="9.7" fill="#f7e190"/><rect x="7.5" y="7.8" width="2.9" height="5" fill="#ffc84f"/></svg>
<span class="t" style="top:610.57px;color:#151515;left:29.80px;transform:rotate(0.01deg) scaleX(0.9287);">TCD6395.tmp</span>
<span class="t" style="top:610.57px;color:#6e6e6e;left:217.00px;transform:rotate(0.01deg) scaleX(0.9425);">06/06/2021 15:29</span>
<span class="t" style="top:610.57px;color:#6e6e6e;left:329.70px;transform:rotate(0.01deg) scaleX(0.9677);">Carpeta de archivos</span>
<svg style="left:15.7px;top:626.63px" width="10.4" height="13" viewBox="0 0 10.4 13"><rect x="0" y="0" width="9.3" height="12.8" rx="0.6" fill="#ffd267"/><rect x="1.3" y="1.4" width="6.6" height="9.7" fill="#f7e190"/><rect x="7.5" y="7.8" width="2.9" height="5" fill="#ffc84f"/></svg>
<span class="t" style="top:626.98px;color:#151515;left:29.80px;transform:rotate(0.01deg) scaleX(0.9287);">TCD6405.tmp</span>
<span class="t" style="top:626.98px;color:#6e6e6e;left:217.00px;transform:rotate(0.01deg) scaleX(0.9425);">06/06/2021 15:29</span>
<span class="t" style="top:626.98px;color:#6e6e6e;left:329.70px;transform:rotate(0.01deg) scaleX(0.9677);">Carpeta de archivos</span>
<svg style="left:15.7px;top:643.05px" width="10.4" height="13" viewBox="0 0 10.4 13"><rect x="0" y="0" width="9.3" height="12.8" rx="0.6" fill="#ffd267"/><rect x="1.3" y="1.4" width="6.6" height="9.7" fill="#f7e190"/><rect x="7.5" y="7.8" width="2.9" height="5" fill="#ffc84f"/></svg>
<span class="t" style="top:643.40px;color:#151515;left:29.80px;transform:rotate(0.01deg) scaleX(0.9935);">vmware-Solvetic1</span>
<span class="t" style="top:643.40px;color:#6e6e6e;left:217.00px;transform:rotate(0.01deg) scaleX(0.9425);">03/06/2021 18:12</span>
<span class="t" style="top:643.40px;color:#6e6e6e;left:329.70px;transform:rotate(0.01deg) scaleX(0.9677);">Carpeta de archivos</span>
<svg style="left:15.7px;top:659.46px" width="10.4" height="13" viewBox="0 0 10.4 13"><rect x="0" y="0" width="9.3" height="12.8" rx="0.6" fill="#ffd267"/><rect x="1.3" y="1.4" width="6.6" height="9.7" fill="#f7e190"/><rect x="7.5" y="7.8" width="2.9" height="5" fill="#ffc84f"/></svg>
<span class="t" style="top:659.81px;color:#151515;left:29.80px;transform:rotate(0.01deg) scaleX(0.9262);">WinSAT</span>
<span class="t" style="top:659.81px;color:#6e6e6e;left:217.00px;transform:rotate(0.01deg) scaleX(0.9425);">06/06/2021 15:35</span>
<span class="t" style="top:659.81px;color:#6e6e6e;left:329.70px;transform:rotate(0.01deg) scaleX(0.9677);">Carpeta de archivos</span>
<svg style="left:15.2px;top:675.32px" width="10.4" height="13" viewBox="0 0 10.4 13"><path d="M0.6 0.6h6l3 3v8.6h-9z" fill="#fff" stroke="#9a9a9a" stroke-width="0.9"/><path d="M6.6 0.6v3h3" fill="none" stroke="#9a9a9a" stroke-width="0.8"/></svg>
<span class="t" style="top:676.22px;color:#151515;left:29.80px;transform:rotate(0.01deg) scaleX(0.8545);">.ses</span>
<span class="t" style="top:676.22px;color:#6e6e6e;left:217.00px;transform:rotate(0.01deg) scaleX(0.9425);">08/06/2021 23:03</span>
<span class="t" style="top:676.22px;color:#6e6e6e;left:329.70px;transform:rotate(0.01deg) scaleX(0.9178);">Archivo SES</span>
<span class="t" style="top:676.22px;color:#6e6e6e;right:1025.30px;transform-origin:100% 0;transform:rotate(0.01deg) scaleX(0.8560);">1 KB</span>
<svg style="left:15.2px;top:691.74px" width="10.4" height="13" viewBox="0 0 10.4 13"><path d="M0.6 0.6h6l3 3v8.6h-9z" fill="#fff" stroke="#9a9a9a" stroke-width="0.9"/><path d="M6.6 0.6v3h3" fill="none" stroke="#9a9a9a" stroke-width="0.8"/></svg>
<span class="t" style="top:692.64px;color:#151515;left:29.80px;transform:rotate(0.01deg) scaleX(0.9211);">~DF5A858C2429D32BDA.TMP</span>
<span class="t" style="top:692.64px;color:#6e6e6e;left:217.00px;transform:rotate(0.01deg) scaleX(0.9425);">07/06/2021 17:38</span>
<span class="t" style="top:692.64px;color:#6e6e6e;left:329.70px;transform:rotate(0.01deg) scaleX(0.9832);">Archivo TMP</span>
<span class="t" style="top:692.64px;color:#6e6e6e;right:1025.30px;transform-origin:100% 0;transform:rotate(0.01deg) scaleX(0.8560);">1 KB</span>
<svg style="left:15.2px;top:708.15px" width="10.4" height="13" viewBox="0 0 10.4 13"><path d="M0.6 0.6h6l3 3v8.6h-9z" fill="#fff" stroke="#9a9a9a" stroke-width="0.9"/><path d="M6.6 0.6v3h3" fill="none" stroke="#9a9a9a" stroke-width="0.8"/></svg>
<span class="t" style="top:709.05px;color:#151515;left:29.80px;transform:rotate(0.01deg) scaleX(0.8988);">~DFBE980853802C84FC.TMP</span>
<span class="t" style="top:709.05px;color:#6e6e6e;left:217.00px;transform:rotate(0.01deg) scaleX(0.9425);">07/06/2021 17:38</span>
<span class="t" style="top:709.05px;color:#6e6e6e;left:329.70px;transform:rotate(0.01deg) scaleX(0.9832);">Archivo TMP</span>
<span class="t" style="top:709.05px;color:#6e6e6e;right:1025.30px;transform-origin:100% 0;transform:rotate(0.01deg) scaleX(0.8533);">16 KB</span>
<svg style="left:15.2px;top:724.57px" width="10.4" height="13" viewBox="0 0 10.4 13"><path d="M0.6 0.6h6l3 3v8.6h-9z" fill="#fff" stroke="#9a9a9a" stroke-width="0.9"/><path d="M6.6 0.6v3h3" fill="none" stroke="#9a9a9a" stroke-width="0.8"/></svg>
<span class="t" style="top:725.47px;color:#151515;left:29.80px;transform:rotate(0.01deg) scaleX(0.9422);">18e190413af045db88dfbd29609eb877.db....</span>
<span class="t" style="top:725.47px;color:#6e6e6e;left:217.00px;transform:rotate(0.01deg) scaleX(0.9425);">06/06/2021 15:42</span>
<span class="t" style="top:725.47px;color:#6e6e6e;left:329.70px;transform:rotate(0.01deg) scaleX(0.9178);">Archivo SES</span>
<span class="t" style="top:725.47px;color:#6e6e6e;right:1025.30px;transform-origin:100% 0;transform:rotate(0.01deg) scaleX(0.8560);">1 KB</span>
<svg style="left:15.2px;top:740.98px" width="10.4" height="13" viewBox="0 0 10.4 13"><path d="M0.6 0.6h6l3 3v8.6h-9z" fill="#fff" stroke="#9a9a9a" stroke-width="0.9"/><path d="M6.6 0.6v3h3" fill="none" stroke="#9a9a9a" stroke-width="0.8"/><path d="M1.6 1.6h4.6v2.8h2.8v6.8h-7.4z" fill="#d6d6d6"/><path d="M3 2v9M7.4 5v6" stroke="#e6e6e6" stroke-width="0.8"/></svg>
<span class="t" style="top:741.88px;color:#151515;left:29.80px;transform:rotate(0.01deg) scaleX(0.9906);">AdobeARM</span>
<span class="t" style="top:741.88px;color:#6e6e6e;left:217.00px;transform:rotate(0.01deg) scaleX(0.9425);">07/06/2021 19:46</span>
<span class="t" style="top:741.88px;color:#6e6e6e;left:329.70px;transform:rotate(0.01deg) scaleX(0.9909);">Documento de te...</span>
<span class="t" style="top:741.88px;color:#6e6e6e;right:1025.30px;transform-origin:100% 0;transform:rotate(0.01deg) scaleX(0.8690);">20 KB</span>
<svg style="left:15.2px;top:757.39px" width="10.4" height="13" viewBox="0 0 10.4 13"><path d="M0.6 0.6h6l3 3v8.6h-9z" fill="#fff" stroke="#9a9a9a" stroke-width="0.9"/><path d="M6.6 0.6v3h3" fill="none" stroke="#9a9a9a" stroke-width="0.8"/><circle cx="2.6" cy="8.6" r="2.2" fill="#bbb" stroke="#888" stroke-width="0.6"/></svg>
<span class="t" style="top:758.29px;color:#151515;left:29.80px;transform:rotate(0.01deg) scaleX(0.9976);">ArmUI</span>
<span class="t" style="top:758.29px;color:#6e6e6e;left:217.00px;transform:rotate(0.01deg) scaleX(0.9425);">08/06/2021 23:00</span>
<span class="t" style="top:758.29px;color:#6e6e6e;left:329.70px;transform:rotate(0.01deg) scaleX(0.9894);">Opciones de confi...</span>
<span class="t" style="top:758.29px;color:#6e6e6e;right:1025.30px;transform-origin:100% 0;transform:rotate(0.01deg) scaleX(0.8809);">252 KB</span>
<svg style="left:15.2px;top:773.81px" width="10.4" height="13" viewBox="0 0 10.4 13"><path d="M0.6 0.6h6l3 3v8.6h-9z" fill="#fff" stroke="#9a9a9a" stroke-width="0.9"/><path d="M6.6 0.6v3h3" fill="none" stroke="#9a9a9a" stroke-width="0.8"/><path d="M1.6 1.6h4.6v2.8h2.8v6.8h-7.4z" fill="#d6d6d6"/><path d="M3 2v9M7.4 5v6" stroke="#e6e6e6" stroke-width="0.8"/></svg>
<span class="t" style="top:774.71px;color:#151515;left:29.80px;transform:rotate(0.01deg) scaleX(0.9663);">cv_debug</span>
<span class="t" style="top:774.71px;color:#6e6e6e;left:217.00px;transform:rotate(0.01deg) scaleX(0.9425);">07/06/2021 19:44</span>
<span class="t" style="top:774.71px;color:#6e6e6e;left:329.70px;transform:rotate(0.01deg) scaleX(0.9909);">Documento de te...</span>
<span class="t" style="top:774.71px;color:#6e6e6e;right:1025.30px;transform-origin:100% 0;transform:rotate(0.01deg) scaleX(0.8560);">1 KB</span>
<svg style="left:15.2px;top:790.22px" width="10.4" height="13" viewBox="0 0 10.4 13"><path d="M0.6 0.6h6l3 3v8.6h-9z" fill="#fff" stroke="#9a9a9a" stroke-width="0.9"/><path d="M6.6 0.6v3h3" fill="none" stroke="#9a9a9a" stroke-width="0.8"/><path d="M1.6 1.6h4.6v2.8h2.8v6.8h-7.4z" fill="#d6d6d6"/><path d="M3 2v9M7.4 5v6" stroke="#e6e6e6" stroke-width="0.8"/></svg>
<span class="t" style="top:790.32px;color:#151515;left:29.80px;transform:rotate(0.01deg) scaleX(0.9578);">DDWTFC-1040C3H-C831C0C-LHT</span>
<span class="t" style="top:790.32px;color:#6e6e6e;left:217.00px;transform:rotate(0.01deg) scaleX(0.9425);">06/06/2021 14:17</span>
<span class="t" style="top:790.32px;color:#6e6e6e;left:329.70px;transform:rotate(0.01deg) scaleX(0.9909);">Documento de te...</span>
<span class="t" style="top:790.32px;color:#6e6e6e;right:1025.30px;transform-origin:100% 0;transform:rotate(0.01deg) scaleX(0.8690);">29 KB</span>
</div>
<span class="t" style="top:795.64px;color:#333;left:11.70px;transform:rotate(0.01deg) scaleX(0.9521);">52 elementos</span>
<span class="t" style="top:795.64px;color:#333;left:82.80px;transform:rotate(0.01deg) scaleX(0.9652);">52 elementos seleccionados</span>
<div style="left:1488px;top:142px;width:9px;height:652px;background:#f0f0f0;"></div>
<div style="left:1488px;top:155px;width:9px;height:461px;background:#c9c9c9;"></div>
<svg style="left:1489.3px;top:145px" width="8" height="6" viewBox="0 0 8 6"><path d="M1 4.6L4 1.6L7 4.6" fill="none" stroke="#333" stroke-width="1.3"/></svg>
<svg style="left:1.8px;top:2.2px" width="10.3" height="12.5" viewBox="0 0 10.3 12.5"><rect x="0" y="0" width="9.27" height="12.5" rx="0.6" fill="#ffd267"/><rect x="1.29" y="1.38" width="6.70" height="9.50" fill="#f8e18f"/><rect x="7.42" y="7.50" width="2.88" height="5.00" fill="#ffc850"/></svg>
<div style="left:18px;top:4px;width:1px;height:9px;background:#9a9a9a;"></div>
<svg style="left:27px;top:3px" width="10" height="13" viewBox="0 0 10 13"><path d="M0.7 0.7h5.8l2.8 2.8v8.8h-8.6z" fill="#fff" stroke="#a9a9a9" stroke-width="0.9"/><path d="M6.5 0.7v2.8h2.8" fill="none" stroke="#a9a9a9" stroke-width="0.7"/><path d="M2.4 7.2L4.3 9.2L7.8 5.2" fill="none" stroke="#d8342f" stroke-width="1.1"/></svg>
<svg style="left:44.4px;top:3.1px" width="10.6" height="12.4" viewBox="0 0 10.6 12.4"><rect x="0" y="0" width="9.54" height="12.4" rx="0.6" fill="#ffd267"/><rect x="1.32" y="1.36" width="6.89" height="9.42" fill="#f8e18f"/><rect x="7.63" y="7.44" width="2.97" height="4.96" fill="#ffc850"/></svg>
<svg style="left:60.8px;top:6.8px" width="6" height="6" viewBox="0 0 6 6"><rect x="0" y="0" width="5.6" height="1" fill="#333"/><path d="M0.3 2.4h5L2.8 5.6z" fill="#333"/></svg>
<div style="left:72.2px;top:4px;width:1.2px;height:9.2px;background:#c4c4c4;"></div>
<svg style="left:1404px;top:2px" width="84" height="12" viewBox="0 0 84 12"><path d="M1.9 6.4h7.8" stroke="#222" stroke-width="1"/><rect x="37.3" y="4.3" width="5.8" height="5.6" rx="0.8" fill="none" stroke="#222" stroke-width="1"/><path d="M39 4.2v-1.6h5.8v5.6h-1.6" fill="none" stroke="#222" stroke-width="1"/><path d="M72.9 2.1L80.7 9.9M80.7 2.1L72.9 9.9" stroke="#222" stroke-width="1"/></svg>
<svg style="left:1470px;top:23px" width="10" height="7" viewBox="0 0 10 7"><path d="M1.3 5.2L4.6 1.9L7.9 5.2" fill="none" stroke="#adadad" stroke-width="0.9"/></svg>
<div style="left:1485.4px;top:20.1px;width:12.6px;height:12.6px;border-radius:50%;background:#2d639c"></div>
<span class="t" style="top:19.80px;color:#fff;font-size:9.5px;font-weight:700;left:1489.39px;transform-origin:50% 0;transform:rotate(0.01deg) scaleX(1.0000);">?</span>
<svg style="left:24px;top:45px" width="20" height="19" viewBox="0 0 20 19"><g transform="translate(7.95,11.85) rotate(45)" fill="#8a8a8a"><rect x="-3.1" y="-11.9" width="6.2" height="2.3"/><rect x="-2.15" y="-9.8" width="4.3" height="8.6"/><path d="M-4.4 1c0-1.9 1.6-2.6 4.4-2.6s4.4 0.7 4.4 2.6z"/><rect x="-0.55" y="0.8" width="1.1" height="7"/><path d="M2.15 -9.6v8" stroke="#7c8fb4" stroke-width="0.5"/></g></svg>
<svg style="left:71px;top:43px" width="21" height="24" viewBox="0 0 21 24"><path d="M1.2 0.8h8.216000000000001l3.5840000000000005 3.5840000000000005v11.716000000000001h-11.8z" fill="#fff" stroke="#adadad" stroke-width="0.9"/><rect x="2.3" y="5.284000000000001" width="9.600000000000001" height="9.716000000000001" fill="#d6e7f8"/><path d="M9.416 0.8v3.5840000000000005h3.5840000000000005" fill="none" stroke="#adadad" stroke-width="0.7"/><path d="M7.8 7.6h8.0l3.5000000000000004 3.5000000000000004v11.1h-11.5z" fill="#fff" stroke="#adadad" stroke-width="0.9"/><rect x="8.9" y="12.0" width="9.3" height="9.1" fill="#b5d9fc"/><path d="M15.8 7.6v3.5000000000000004h3.5000000000000004" fill="none" stroke="#adadad" stroke-width="0.7"/></svg>
<svg style="left:105.5px;top:42px" width="17" height="25" viewBox="0 0 17 25"><path d="M6 3.2L8.5 0.6L11 3.2z" fill="#9db1d3"/><rect x="0.8" y="3.2" width="15.4" height="20.4" rx="1" fill="#8ea4cb"/><rect x="4.4" y="2.6" width="8.2" height="2.6" fill="#b8c8e2"/><rect x="2.3" y="5.4" width="12.4" height="16.6" fill="#fff"/><path d="M3 8.2h11M3 12h11M3 15.8h11M3 19.6h11" stroke="#d7e6da" stroke-width="0.9"/><path d="M3 10.1h11M3 13.9h11M3 17.7h11" stroke="#e4e6f2" stroke-width="1.2"/></svg>
<svg style="left:133.5px;top:41.5px" width="12" height="14" viewBox="0 0 12 14"><path d="M2.6 0.8L7 9.2M8.6 0.8L4.4 9.2" stroke="#8b8b8b" stroke-width="1.1"/><ellipse cx="3.2" cy="10.8" rx="1.9" ry="1.7" transform="rotate(-30 3.2 10.8)" fill="none" stroke="#2b6cb8" stroke-width="1.3"/><ellipse cx="8.3" cy="10.8" rx="1.9" ry="1.7" transform="rotate(30 8.3 10.8)" fill="none" stroke="#2b6cb8" stroke-width="1.3"/></svg>
<svg style="left:132.6px;top:62.4px" width="12.4" height="7" viewBox="0 0 12.4 7"><rect x="0.3" y="0.3" width="11.6" height="6.3" fill="#b6dcfd" stroke="#d6ebfd" stroke-width="0.6"/><path d="M1.8 2.2l1.2 2.6M3.2 2.2l1.2 2.6M4.6 2.2l1 2.6" stroke="#222" stroke-width="0.8"/><path d="M5.8 4.5h4.6" stroke="#444" stroke-width="0.9"/></svg>
<svg style="left:133.6px;top:76px" width="11" height="13.4" viewBox="0 0 11 13.4"><rect x="3.6" y="0.2" width="3.6" height="1.6" fill="#a8b8d6"/><rect x="0.9" y="1.5" width="9" height="11" rx="0.6" fill="#fff" stroke="#7f96bf" stroke-width="1.1"/><path d="M3.6 9.4L6.6 5.6M4.6 5.4h2.3v2.4" fill="none" stroke="#6d92c8" stroke-width="1"/></svg>
<svg style="left:253.1px;top:43px" width="22" height="24" viewBox="0 0 22 24"><rect x="0.5" y="0.6" width="16.9" height="22.3" rx="0.7" fill="#ffd065"/><rect x="1.8" y="2" width="13.4" height="19.4" fill="#f8e28f"/><rect x="15.6" y="13.6" width="3" height="9.3" fill="#ffc850"/><path d="M8.5 17.3L14.2 11.1V14.8H20.9V19.3H14.2V23z" fill="#6699cc"/><path d="M16.5 19.3h4.4v-4.5M9.2 18l5 5" stroke="#1f5aa0" stroke-width="0.9" fill="none"/></svg>
<svg style="left:286.6px;top:41.5px" width="22" height="25" viewBox="0 0 22 25"><rect x="0.4" y="2.1" width="17.9" height="22.3" rx="0.7" fill="#ffd065"/><rect x="1.7" y="3.6" width="13" height="19.3" fill="#f8e28f"/><rect x="15.2" y="14" width="1.1" height="9" fill="#f8e28f"/><path d="M7.9 1.0h4.616l2.184 2.184v9.216000000000001h-6.8z" fill="#fff" stroke="#b5b5b5" stroke-width="0.9"/><rect x="9.0" y="4.084" width="4.6" height="7.216000000000001" fill="#d4e6fa"/><path d="M12.515999999999998 1.0v2.184h2.184" fill="none" stroke="#b5b5b5" stroke-width="0.7"/><path d="M11.9 3.0h5.768l2.6320000000000006 2.6320000000000006v9.168h-8.4z" fill="#fff" stroke="#b5b5b5" stroke-width="0.9"/><rect x="13.0" y="6.532" width="6.2" height="7.167999999999999" fill="#b5d9fc"/><path d="M17.668 3.0v2.6320000000000006h2.6320000000000006" fill="none" stroke="#b5b5b5" stroke-width="0.7"/></svg>
<svg style="left:325px;top:44px" width="22" height="22" viewBox="0 0 22 22"><path d="M2.3 2.3L19.7 19.7M19.7 2.3L2.3 19.7" stroke="#dc3b3a" stroke-width="3.4"/></svg>
<svg style="left:360px;top:44px" width="24" height="22" viewBox="0 0 24 22"><rect x="1.4" y="6.5" width="21" height="9" rx="0.8" fill="#fff" stroke="#b6b9b1" stroke-width="1"/><rect x="3.2" y="8.2" width="10.8" height="5" fill="#6699cc" stroke="#9fcbf6" stroke-width="0.6"/><path d="M18.2 1.8v18.6M14.4 0.9c2.2 0 3.8 0.5 3.8 1.9c0-1.4 1.6-1.9 3.8-1.9M14.4 21.1c2.2 0 3.8-0.5 3.8-1.9c0 1.4 1.6 1.9 3.8 1.9" fill="none" stroke="#444" stroke-width="1.1"/></svg>
<svg style="left:406px;top:44px" width="16" height="23" viewBox="0 0 16 23"><rect x="1.6" y="1" width="12.4" height="17.2" rx="0.6" fill="#ffc95c"/><path d="M1 2.6l3.8 1.6v17.6L1 18.4z" fill="#f7e29a"/><rect x="12" y="12.6" width="3.3" height="5.6" fill="#f7e29a"/></svg>
<svg style="left:434.8px;top:41.8px" width="13.4" height="13.2" viewBox="0 0 13.4 13.2"><rect x="0.6" y="0.6" width="8" height="5.6" fill="#fff" stroke="#4b8fe0" stroke-width="1"/><rect x="0.6" y="0.3" width="8" height="1.3" fill="#4b8fe0"/><path d="M3.9 2.1h3.608l1.7920000000000003 1.7920000000000003v6.808h-5.4z" fill="#fff" stroke="#aaa" stroke-width="0.9"/><rect x="5.0" y="4.792" width="3.2" height="4.808" fill="#fff"/><path d="M7.508000000000001 2.1v1.7920000000000003h1.7920000000000003" fill="none" stroke="#aaa" stroke-width="0.7"/><path d="M7.3 5.5h3.464l1.7360000000000002 1.7360000000000002v5.064h-5.2z" fill="#fff" stroke="#aaa" stroke-width="0.9"/><rect x="8.4" y="8.136000000000001" width="3.0" height="3.064" fill="#cfe4f8"/><path d="M10.764 5.5v1.7360000000000002h1.7360000000000002" fill="none" stroke="#aaa" stroke-width="0.7"/></svg>
<svg style="left:434.8px;top:59px" width="12.6" height="13.2" viewBox="0 0 12.6 13.2"><path d="M3.2 0.7h6.2l2.6 2.6v9.2H3.2z" fill="#fff" stroke="#aaa" stroke-width="0.9"/><path d="M9.4 0.7v2.6h2.6" fill="none" stroke="#aaa" stroke-width="0.7"/><path d="M3 1.8l2.8 0.9L4.4 4.4L3.6 6.7L0.3 6.6L2.2 4.4z" fill="#4a8ad4"/></svg>
<svg style="left:552px;top:43px" width="17.4" height="23" viewBox="0 0 17.4 23"><path d="M0.7 0.7h11.4l4.6 4.6v17H0.7z" fill="#fff" stroke="#b3b3b3" stroke-width="1"/><path d="M12.1 0.7v4.6h4.6" fill="none" stroke="#b3b3b3" stroke-width="0.8"/><path d="M3 12.7L6.7 16.7L14.4 8.7" fill="none" stroke="#d9302c" stroke-width="1.6"/></svg>
<svg style="left:590.6px;top:42.8px" width="12.6" height="11" viewBox="0 0 12.6 11"><path d="M0.2 0.3h4.6l0.9 1.5h6.7v8.9H0.2z" fill="#ffc857"/><rect x="0.9" y="1" width="3.2" height="0.8" fill="#d8342f"/><rect x="1.6" y="3" width="3.6" height="0.8" fill="#ffe29a"/><path d="M2.6 6.2h7.6v4.7H8v-2.3H4.8v2.3H2.6z" fill="#3b78c4"/></svg>
<svg style="left:591.8px;top:59px" width="11.4" height="13.2" viewBox="0 0 11.4 13.2"><path d="M0.6 0.6h6.6l2.6 2.6v9.4H0.6z" fill="#e9f0f9" stroke="#bcd2ea" stroke-width="0.9"/><path d="M1.8 11L9.8 2.6l1.1 1L3 12z" fill="#fff" stroke="#bcd2ea" stroke-width="0.7"/></svg>
<svg style="left:590.8px;top:76px" width="13" height="13" viewBox="0 0 13 13"><rect x="0.5" y="0.5" width="7.8" height="10.6" fill="#e6ebf5" stroke="#c9d6e8" stroke-width="0.8"/><circle cx="7.6" cy="8.6" r="3.9" fill="#eef3fa" stroke="#b7cbe4" stroke-width="1"/><path d="M7.6 8.8L10 6.8M7.6 8.8H5.4" stroke="#9db8da" stroke-width="0.9" fill="none"/><path d="M2.6 8.6l1.5 2.2l1.4-2.2z" fill="#9db8da"/></svg>
<svg style="left:657.8px;top:42px" width="13" height="13" viewBox="0 0 13 13"><rect x="0.45" y="0.45" width="5.5" height="5.5" fill="#b5d8fb" stroke="#3b82d6" stroke-width="0.9"/><path d="M3.2 1v4.4M1 3.2h4.4" stroke="#d8ecff" stroke-width="0.7"/><rect x="6.8500000000000005" y="0.45" width="5.5" height="5.5" fill="#b5d8fb" stroke="#3b82d6" stroke-width="0.9"/><path d="M9.600000000000001 1v4.4M7.4 3.2h4.4" stroke="#d8ecff" stroke-width="0.7"/><rect x="0.45" y="6.75" width="5.5" height="5.5" fill="#b5d8fb" stroke="#3b82d6" stroke-width="0.9"/><path d="M3.2 7.3v4.4M1 9.5h4.4" stroke="#d8ecff" stroke-width="0.7"/><rect x="6.8500000000000005" y="6.75" width="5.5" height="5.5" fill="#b5d8fb" stroke="#3b82d6" stroke-width="0.9"/><path d="M9.600000000000001 7.3v4.4M7.4 9.5h4.4" stroke="#d8ecff" stroke-width="0.7"/></svg>
<svg style="left:658.4px;top:60.2px" width="12" height="12" viewBox="0 0 12 12"><rect x="0.5" y="0.5" width="4.0" height="4.0" rx="0.4" fill="#fff" stroke="#b9b9b9" stroke-width="0.8"/><rect x="7.0" y="0.5" width="4.0" height="4.0" rx="0.4" fill="#fff" stroke="#b9b9b9" stroke-width="0.8"/><rect x="0.5" y="6.7" width="4.0" height="4.0" rx="0.4" fill="#fff" stroke="#b9b9b9" stroke-width="0.8"/><rect x="7.0" y="6.7" width="4.0" height="4.0" rx="0.4" fill="#fff" stroke="#b9b9b9" stroke-width="0.8"/></svg>
<svg style="left:657.8px;top:76px" width="13" height="13.4" viewBox="0 0 13 13.4"><rect x="1.2000000000000002" y="1.7999999999999998" width="3.8" height="3.8" rx="0.4" fill="#fff" stroke="#b9b9b9" stroke-width="0.8"/><rect x="7.05" y="0.65" width="5.3999999999999995" height="5.3999999999999995" fill="#b5d8fb" stroke="#3b82d6" stroke-width="0.9"/><path d="M9.75 1.2v4.3M7.6 3.35h4.3" stroke="#d8ecff" stroke-width="0.7"/><rect x="0.55" y="7.3500000000000005" width="5.3999999999999995" height="5.3999999999999995" fill="#b5d8fb" stroke="#3b82d6" stroke-width="0.9"/><path d="M3.25 7.9v4.3M1.1 10.05h4.3" stroke="#d8ecff" stroke-width="0.7"/><rect x="7.6000000000000005" y="8.4" width="4.0" height="4.0" rx="0.4" fill="#fff" stroke="#b9b9b9" stroke-width="0.8"/></svg>
<svg style="left:9px;top:119px" width="12" height="10" viewBox="0 0 12 10"><path d="M10.4 5.1H1.6M5.4 1.2L1.5 5.1L5.4 9" fill="none" stroke="#cfcfcf" stroke-width="1"/></svg>
<svg style="left:32px;top:119px" width="12" height="10" viewBox="0 0 12 10"><path d="M1.4 5.1h8.9M6.5 1.2L10.4 5.1L6.5 9" fill="none" stroke="#cfcfcf" stroke-width="1"/></svg>
<svg style="left:53.6px;top:122px" width="6" height="4" viewBox="0 0 6 4"><path d="M0.7 0.7L2.8 2.8L4.9 0.7" fill="none" stroke="#c9c9c9" stroke-width="0.8"/></svg>
<svg style="left:67.6px;top:119.4px" width="10.4" height="11" viewBox="0 0 10.4 11"><path d="M5.1 10.2V1.4M0.9 5.4L5.1 1.1L9.3 5.4" fill="none" stroke="#444" stroke-width="1.2"/></svg>
<svg style="left:86.9px;top:117px" width="10.1" height="13" viewBox="0 0 10.1 13"><rect x="0" y="0" width="9.09" height="13" rx="0.6" fill="#ffd267"/><rect x="1.26" y="1.43" width="6.56" height="9.88" fill="#f8e18f"/><rect x="7.27" y="7.80" width="2.83" height="5.20" fill="#ffc850"/></svg>
<svg style="left:1175px;top:122px" width="9" height="7" viewBox="0 0 9 7"><path d="M1 1.3L4.2 4.6L7.4 1.3" fill="none" stroke="#444" stroke-width="1.3"/></svg>
<svg style="left:1197.5px;top:119.5px" width="10" height="10.6" viewBox="0 0 10 10.6"><path d="M7.8 3.7A3.3 3.3 0 1 1 4.5 2.4" fill="none" stroke="#555" stroke-width="1"/><path d="M2.3 1.5L5.2 1.8L5.3 4.6z" fill="#3a3a3a"/></svg>
<svg style="left:1234.6px;top:119.2px" width="11" height="11" viewBox="0 0 11 11"><circle cx="7" cy="3.8" r="2.9" fill="none" stroke="#9a9a9a" stroke-width="0.8"/><path d="M4.9 5.9L0.8 9.9" stroke="#b49a84" stroke-width="0.9"/></svg>
<div style="left:1444.9px;top:751.9px;width:51.4px;height:51.4px;border-radius:50%;background:#fff;border:0.7px solid #e2e7f5;box-sizing:border-box"></div>
<svg style="left:1489.5px;top:785.5px" width="8" height="6" viewBox="0 0 8 6"><path d="M1 1.2L4 4.2L7 1.2" fill="none" stroke="#333" stroke-width="1.3"/></svg>
<svg style="left:1462.6px;top:794.3px" width="17.4" height="13" viewBox="0 0 17.4 13"><rect x="0.5" y="0.5" width="16.4" height="14" fill="#e5f1fb" stroke="#8cc6fb" stroke-width="1"/><rect x="3.6" y="4.4" width="2.4" height="3" fill="#fff" stroke="#bbb" stroke-width="0.5"/><rect x="3.6" y="9" width="2.4" height="3" fill="#fff" stroke="#bbb" stroke-width="0.5"/><path d="M7.6 5.6h2.6M11.4 5.6h2.8M7.6 9.6h2.6M11.4 9.6h2.8" stroke="#888" stroke-width="0.9"/></svg>
<svg style="left:1483px;top:798px" width="11.4" height="9" viewBox="0 0 11.4 9"><rect x="0.5" y="0.5" width="10.2" height="10" fill="#fff" stroke="#b5b5b5" stroke-width="0.9"/><rect x="2" y="2" width="7.2" height="5.6" fill="#a9d4fb"/><path d="M2 7.2V4.4L9.2 7.2z" fill="#222"/><path d="M4 6.6l5.2 1" stroke="#2b6cb8" stroke-width="1"/></svg>
<svg style="left:1450px;top:752px" width="40" height="50" viewBox="0 0 40 50"><path d="M21.6 35.3C20.9 34.7 19.3 32.7 17.7 31.7C16.1 30.8 13.7 30.6 11.9 29.6C10.1 28.7 8.1 27.7 6.9 26.0C5.7 24.3 5.0 21.6 4.8 19.5C4.6 17.4 4.8 15.1 5.8 13.1C6.7 11.1 8.5 8.7 10.5 7.3C12.5 5.9 15.3 5.0 17.7 4.5C20.1 4.0 22.8 4.0 24.9 4.5C27.1 5.0 29.2 6.0 30.6 7.3C32.0 8.6 33.1 10.7 33.5 12.4C33.9 14.1 33.6 15.6 33.1 17.4C32.6 19.2 31.2 21.2 30.6 23.1C29.9 25.0 29.3 27.2 29.2 28.9C29.1 30.6 30.5 31.9 29.9 33.2C29.3 34.5 26.8 35.6 25.6 36.8C24.3 38.0 22.5 39.6 22.4 40.4C22.3 41.2 23.4 41.6 24.9 41.4C26.4 41.2 29.6 39.6 31.3 39.3C33.0 39.0 34.5 39.1 34.9 39.6C35.3 40.1 34.6 41.4 33.5 42.5C32.4 43.6 29.9 45.3 28.5 46.1C27.1 46.9 25.5 47.3 24.9 47.5" fill="none" stroke="#6f9fd8" stroke-width="1.5" stroke-linecap="round" stroke-linejoin="round"/></svg>
<div style="left:154px;top:235px;width:233px;height:206px;background:#fff;border-top:1px solid #adadad;border-left:1px solid #adadad;box-sizing:border-box;box-shadow:2.1px 2.1px 0.6px #838387;"></div>
<div style="left:156px;top:237px;width:229px;height:202px;background:#f0f0f0;"></div>
<span class="t" style="top:239.90px;color:#111;font-weight:700;left:181.30px;transform:rotate(0.01deg) scaleX(0.9299);">Anclar al Acceso rápido</span>
<span class="t" style="top:256.90px;color:#111;left:181.30px;transform:rotate(0.01deg) scaleX(0.9903);">Examinar con Microsoft Defender...</span>
<span class="t" style="top:279.80px;color:#111;left:181.30px;transform:rotate(0.01deg) scaleX(0.9532);">Conceder acceso a</span>
<span class="t" style="top:302.40px;color:#111;left:181.30px;transform:rotate(0.01deg) scaleX(0.9213);">Enviar a</span>
<span class="t" style="top:325.10px;color:#111;left:181.30px;transform:rotate(0.01deg) scaleX(0.9867);">Cortar</span>
<span class="t" style="top:342.30px;color:#111;left:181.30px;transform:rotate(0.01deg) scaleX(0.9955);">Copiar</span>
<span class="t" style="top:365.10px;color:#111;left:181.30px;transform:rotate(0.01deg) scaleX(0.9618);">Crear acceso directo</span>
<span class="t" style="top:382.10px;color:#111;left:181.30px;transform:rotate(0.01deg) scaleX(0.9830);">Eliminar</span>
<span class="t" style="top:399.50px;color:#111;left:181.30px;transform:rotate(0.01deg) scaleX(0.9452);">Cambiar nombre</span>
<span class="t" style="top:422.00px;color:#111;left:181.30px;transform:rotate(0.01deg) scaleX(0.9496);">Propiedades</span>
<div style="left:162.5px;top:275.2px;width:216.7px;height:1px;background:#a3a3a3;"></div>
<div style="left:162.5px;top:297.7px;width:216.7px;height:1px;background:#a3a3a3;"></div>
<div style="left:162.5px;top:319.9px;width:216.7px;height:1px;background:#a3a3a3;"></div>
<div style="left:162.5px;top:359.5px;width:216.7px;height:1px;background:#a3a3a3;"></div>
<div style="left:162.5px;top:417.0px;width:216.7px;height:1px;background:#a3a3a3;"></div>
<svg style="left:372px;top:281.7px" width="7" height="10" viewBox="0 0 7 10"><path d="M1 0.7L5.8 5L1 9.3" fill="none" stroke="#333" stroke-width="0.9"/></svg>
<svg style="left:372px;top:304.3px" width="7" height="10" viewBox="0 0 7 10"><path d="M1 0.7L5.8 5L1 9.3" fill="none" stroke="#333" stroke-width="0.9"/></svg>
<svg style="left:162.5px;top:258px" width="12.5" height="12.5" viewBox="0 0 12.5 12.5"><rect width="12.5" height="12.5" fill="#2565a3"/><path d="M1.6 1.6h9.3v4.2c0 2.8-2.2 4.6-4.65 5.3C3.8 10.4 1.6 8.6 1.6 5.8z" fill="#fff"/><path d="M6.25 1.6v9.5M1.6 5.9h9.3" stroke="#2565a3" stroke-width="1"/></svg>
<svg style="left:215px;top:393px" width="55" height="65" viewBox="215 393 55 65"><path d="M225.2 398.9L256.5 411.4L248.2 417.5L262.5 441.1L244.4 450.9L231 428.2L221.2 432.8Z" fill="#dc3e3b" stroke="#2b2b33" stroke-width="1.6" stroke-linejoin="round"/></svg>
<div style="left:0px;top:0px;width:1498px;height:1px;background:#2d2d37;"></div>
<div style="left:0px;top:0px;width:1px;height:808px;background:#2d2d37;"></div>
<div style="left:1497px;top:0px;width:1px;height:808px;background:#2d2d37;"></div>
<div style="left:0px;top:807px;width:1498px;height:1px;background:#2d2d37;"></div>
</div>
</body></html>
